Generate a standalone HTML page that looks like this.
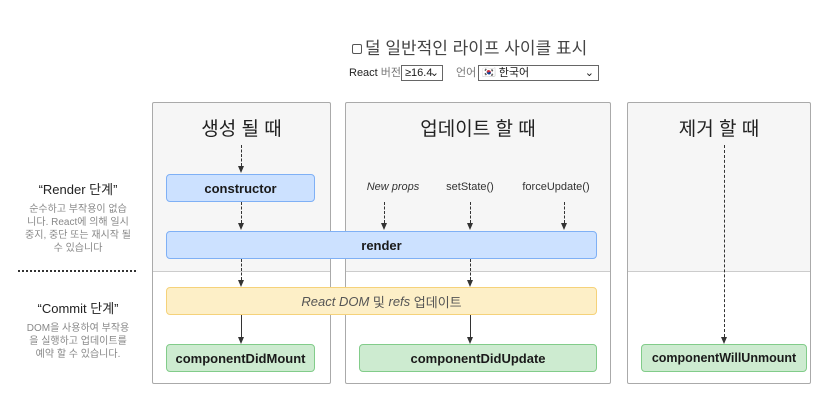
<!DOCTYPE html>
<html><head><meta charset="utf-8"><style>
*{margin:0;padding:0;box-sizing:border-box}
body{width:836px;height:404px;background:#fff;font-family:"Liberation Sans","Noto Sans CJK KR",sans-serif;color:#1a1a1a;position:relative;overflow:hidden}
.a{position:absolute}
.col{position:absolute;top:102px;height:282px;border:1px solid #aaa;border-radius:2px;background:linear-gradient(#f6f6f6 0,#f6f6f6 168px,#ccc 168px,#ccc 169px,#fff 169px)}
.t{position:absolute;font-size:19px;text-align:center;top:114px;color:#222}
.box{position:absolute;height:28px;border-radius:4px;font-weight:bold;font-size:13px;display:flex;align-items:center;justify-content:center}
.b{background:#cce1ff;border:1px solid #7fb0f5}
.y{background:#fdefc7;border:1px solid #f5d27a;font-weight:normal;color:#555}
.g{background:#cdebd0;border:1px solid #82cc8a}
.dv{position:absolute;width:0;border-left:1px dashed #333}
.sv{position:absolute;width:0;border-left:1px solid #333}
.ah{position:absolute;width:0;height:0;border-left:3px solid transparent;border-right:3px solid transparent;border-top:7px solid #333}
.lb{position:absolute;font-size:11px;text-align:center;color:#333}
.lt{position:absolute;text-align:center;width:140px;left:8px}
.lt b{display:block;font-weight:normal;font-size:13px;color:#222}
.lt p{font-size:10px;color:#888;line-height:13px;margin-top:5px}
.sel{position:absolute;top:65px;border:1px solid #666;height:16px;line-height:14px;font-size:11px;padding:0 3px;white-space:nowrap}
</style></head><body>
<div class="a" style="left:352px;top:34px;font-size:17px;color:#444"><span style="display:inline-block;width:10px;height:10px;border:1px solid #555;border-radius:2px;margin-right:3px"></span>덜 일반적인 라이프 사이클 표시</div>
<div class="a" style="left:349px;top:66px;font-size:11px;line-height:14px;color:#222;white-space:nowrap">React <span style="color:#777">버전</span></div>
<div class="sel" style="left:401px;width:42px">≥16.4<span style="position:absolute;right:3px">⌄</span></div>
<div class="a" style="left:456px;top:66px;font-size:11px;line-height:14px;color:#777">언어</div>
<div class="sel" style="left:478px;width:121px">🇰🇷 한국어<span style="position:absolute;right:4px">⌄</span></div>

<div class="col" style="left:152px;width:179px"></div>
<div class="col" style="left:345px;width:266px"></div>
<div class="col" style="left:627px;width:184px"></div>
<div class="t" style="left:152px;width:179px">생성 될 때</div>
<div class="t" style="left:345px;width:266px">업데이트 할 때</div>
<div class="t" style="left:627px;width:184px">제거 할 때</div>

<div class="lt" style="top:179px"><b>“Render 단계”</b><p>순수하고 부작용이 없습<br>니다. React에 의해 일시<br>중지, 중단 또는 재시작 될<br>수 있습니다</p></div>
<div class="a" style="left:18px;top:270px;width:118px;border-top:2px dotted #333"></div>
<div class="lt" style="top:298px"><b>“Commit 단계”</b><p>DOM을 사용하여 부작용<br>을 실행하고 업데이트를<br>예약 할 수 있습니다.</p></div>

<div class="lb" style="left:358px;top:181px;width:70px;font-style:italic">New props</div>
<div class="lb" style="left:435px;top:181px;width:70px">setState()</div>
<div class="lb" style="left:516px;top:181px;width:80px">forceUpdate()</div>

<div class="dv" style="left:241px;top:145px;height:21px"></div><div class="ah" style="left:238px;top:166px"></div>
<div class="dv" style="left:241px;top:202px;height:21px"></div><div class="ah" style="left:238px;top:223px"></div>
<div class="dv" style="left:241px;top:259px;height:21px"></div><div class="ah" style="left:238px;top:280px"></div>
<div class="sv" style="left:241px;top:315px;height:22px"></div><div class="ah" style="left:238px;top:337px"></div>
<div class="dv" style="left:384px;top:202px;height:21px"></div><div class="ah" style="left:381px;top:223px"></div>
<div class="dv" style="left:470px;top:202px;height:21px"></div><div class="ah" style="left:467px;top:223px"></div>
<div class="dv" style="left:564px;top:202px;height:21px"></div><div class="ah" style="left:561px;top:223px"></div>
<div class="dv" style="left:470px;top:259px;height:21px"></div><div class="ah" style="left:467px;top:280px"></div>
<div class="sv" style="left:470px;top:315px;height:22px"></div><div class="ah" style="left:467px;top:337px"></div>
<div class="dv" style="left:724px;top:145px;height:192px"></div><div class="ah" style="left:721px;top:337px"></div>

<div class="box b" style="left:166px;top:174px;width:149px">constructor</div>
<div class="box b" style="left:166px;top:231px;width:431px">render</div>
<div class="box y" style="left:166px;top:287px;width:431px"><i>React DOM</i>&nbsp;및&nbsp;<i>refs</i>&nbsp;업데이트</div>
<div class="box g" style="left:166px;top:344px;width:149px">componentDidMount</div>
<div class="box g" style="left:359px;top:344px;width:238px">componentDidUpdate</div>
<div class="box g" style="left:641px;top:344px;width:166px;font-size:12.5px">componentWillUnmount</div>
</body></html>
